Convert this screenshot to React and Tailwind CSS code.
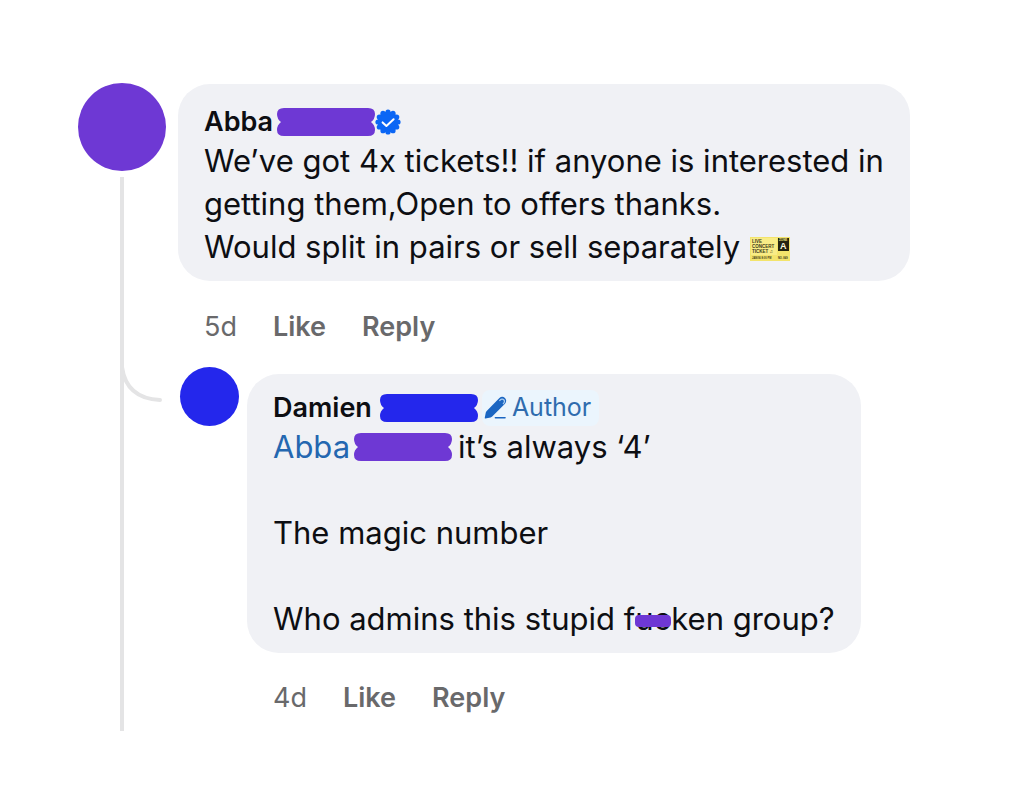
function Redaction({ className }) {
  return (
    <svg
      viewBox="0 0 98 28"
      className={`h-7 w-[98px] shrink-0 ${className}`}
      fill="currentColor"
      aria-hidden="true"
    >
      <path d="M7 0H91Q98 0 98 6Q98 11 94 14Q98 17 98 22Q98 28 91 28H7Q0 28 0 22Q0 17 4 14Q0 11 0 6Q0 0 7 0Z" />
    </svg>
  );
}

function VerifiedBadge() {
  return (
    <svg viewBox="0 0 26 26" className="h-[26px] w-[26px] shrink-0" role="img" aria-label="Verified">
      <g fill="#0b66f5">
        <circle cx="13" cy="13" r="10.5" />
        <circle cx="13" cy="3" r="2.6" />
        <circle cx="18" cy="4.3" r="2.6" />
        <circle cx="21.7" cy="8" r="2.6" />
        <circle cx="23" cy="13" r="2.6" />
        <circle cx="21.7" cy="18" r="2.6" />
        <circle cx="18" cy="21.7" r="2.6" />
        <circle cx="13" cy="23" r="2.6" />
        <circle cx="8" cy="21.7" r="2.6" />
        <circle cx="4.3" cy="18" r="2.6" />
        <circle cx="3" cy="13" r="2.6" />
        <circle cx="4.3" cy="8" r="2.6" />
        <circle cx="8" cy="4.3" r="2.6" />
      </g>
      <path
        d="M7.6 13.4L11.4 17L18.6 10.2"
        fill="none"
        stroke="#fff"
        strokeWidth="2"
        strokeLinecap="round"
        strokeLinejoin="round"
      />
    </svg>
  );
}

function PenIcon() {
  return (
    <svg viewBox="0 0 24 24" className="h-6 w-6 shrink-0" aria-hidden="true">
      <path
        d="M1.4 22.6Q0.6 22.6 0.8 21.6L1.8 16.6Q2 15.6 2.7 14.9L15.4 2Q18.2 -0.4 21 2Q23.4 4.8 21 7.8L8.2 20.5Q7.6 21.2 6.6 21.5Z"
        fill="#1b66c2"
      />
      <path d="M15.4 4.8Q18 1.8 20 4Q21.4 5.6 19 8" fill="none" stroke="#a9cdf0" strokeWidth="1.2" />
      <path d="M11.4 21.8H21" stroke="#1b66c2" strokeWidth="1.6" strokeLinecap="round" />
    </svg>
  );
}

function Ticket() {
  return (
    <svg
      viewBox="0 0 40 24"
      className="ml-2.5 inline-block h-6 w-10 align-[-3px]"
      fontFamily="'Liberation Sans', sans-serif"
      fontWeight="700"
      fill="#3d3a18"
      role="img"
      aria-label="Live concert ticket"
    >
      <path d="M0 0H40V24H0Z" fill="#f3e46c" />
      <path d="M1 1H27V18H1Z" fill="#f8ec86" />
      <text x="2" y="6" fontSize="4.5">LIVE</text>
      <text x="2" y="11" fontSize="4.5">CONCERT</text>
      <text x="2" y="16" fontSize="4.5">TICKET ♫</text>
      <path d="M28 1H39V14H28Z" fill="#25240f" />
      <text x="29" y="4" fontSize="3" fill="#f8ec86">ZONE</text>
      <text x="30" y="12" fontSize="9" fill="#fffbe0">A</text>
      <text x="2" y="22" fontSize="2.6">JAN/06 8:00 PM</text>
      <text x="28" y="22" fontSize="2.6">NO. 849</text>
    </svg>
  );
}

function Actions({ age, className }) {
  return (
    <div className={`flex items-center gap-9 px-[26px] text-[27px] leading-9 text-[#69696b] ${className}`}>
      <span>{age}</span>
      <button type="button" className="font-semibold">Like</button>
      <button type="button" className="font-semibold">Reply</button>
    </div>
  );
}

export default function App() {
  return (
    <main className="flex min-h-screen gap-3 bg-white pt-[83px] pb-[54px] pl-[78px] font-['Inter','Liberation_Sans',sans-serif] text-[#0d0e12]">
      <div className="flex shrink-0 flex-col items-center">
        <div className="h-[88px] w-[88px] rounded-full bg-[#6e38d4]" />
        <div className="mt-1.5 w-1 flex-1 bg-[#e4e4e5]" />
      </div>

      <div className="min-w-0 flex-1 pt-px pb-[15px]">
        <article className="w-fit rounded-[32px] bg-[#f0f1f5] px-[26px] pt-5 pb-[13px]">
          <header className="flex h-[35px] items-center">
            <h2 className="text-[27px] leading-9 font-semibold">Abba</h2>
            <Redaction className="ml-1 text-[#6e38d4]" />
            <VerifiedBadge />
          </header>
          <p className="text-[31px] leading-[43px]">
            We’ve got 4x tickets!! if anyone is interested in
            <br />
            getting them,Open to offers thanks.
            <br />
            Would split in pairs or sell separately
            <Ticket />
          </p>
        </article>
        <Actions age="5d" className="mt-7" />

        {/* reply */}
        <div className="relative mt-[22px] flex gap-2 pl-0.5">
          <svg
            viewBox="0 0 44 40"
            className="absolute -top-1 -left-[58px] h-10 w-11"
            fill="none"
            stroke="#e4e4e5"
            strokeWidth="4"
            aria-hidden="true"
          >
            <path d="M2 4C5 26 18 36 40 37" strokeLinecap="round" />
          </svg>
          <div className="h-[59px] w-[59px] shrink-0 rounded-full bg-[#2427ec]" />
          <div className="pt-[7px]">
            <article className="w-fit rounded-[32px] bg-[#f0f1f5] px-[26px] pt-4 pb-[13px]">
              <header className="flex h-[35px] items-center">
                <h2 className="text-[27px] leading-9 font-semibold">Damien</h2>
                <Redaction className="ml-2 text-[#2427ec]" />
                <span className="ml-1 flex h-9 items-center gap-1 rounded-lg bg-[#ebf5fd] px-2 pl-0.5 text-[25px] text-[#2f6cae]">
                  <PenIcon />
                  Author
                </span>
              </header>
              <div className="text-[31px] leading-[43px]">
                <p className="mb-[43px] flex items-center">
                  <a href="#abba" className="text-[#2467b0]">Abba</a>
                  <Redaction className="mx-1 text-[#6e38d4]" />
                  <span className="ml-0.5">it’s always ‘4’</span>
                </p>
                <p className="mb-[43px]">The magic number</p>
                <p>
                  Who admins this stupid f
                  <span className="relative">
                    uc
                    <span className="absolute inset-x-0 top-1/2 h-3 -translate-y-1 rounded-sm bg-[#6e38d4]" />
                  </span>
                  ken group?
                </p>
              </div>
            </article>
            <Actions age="4d" className="mt-[27px]" />
          </div>
        </div>
      </div>
    </main>
  );
}
